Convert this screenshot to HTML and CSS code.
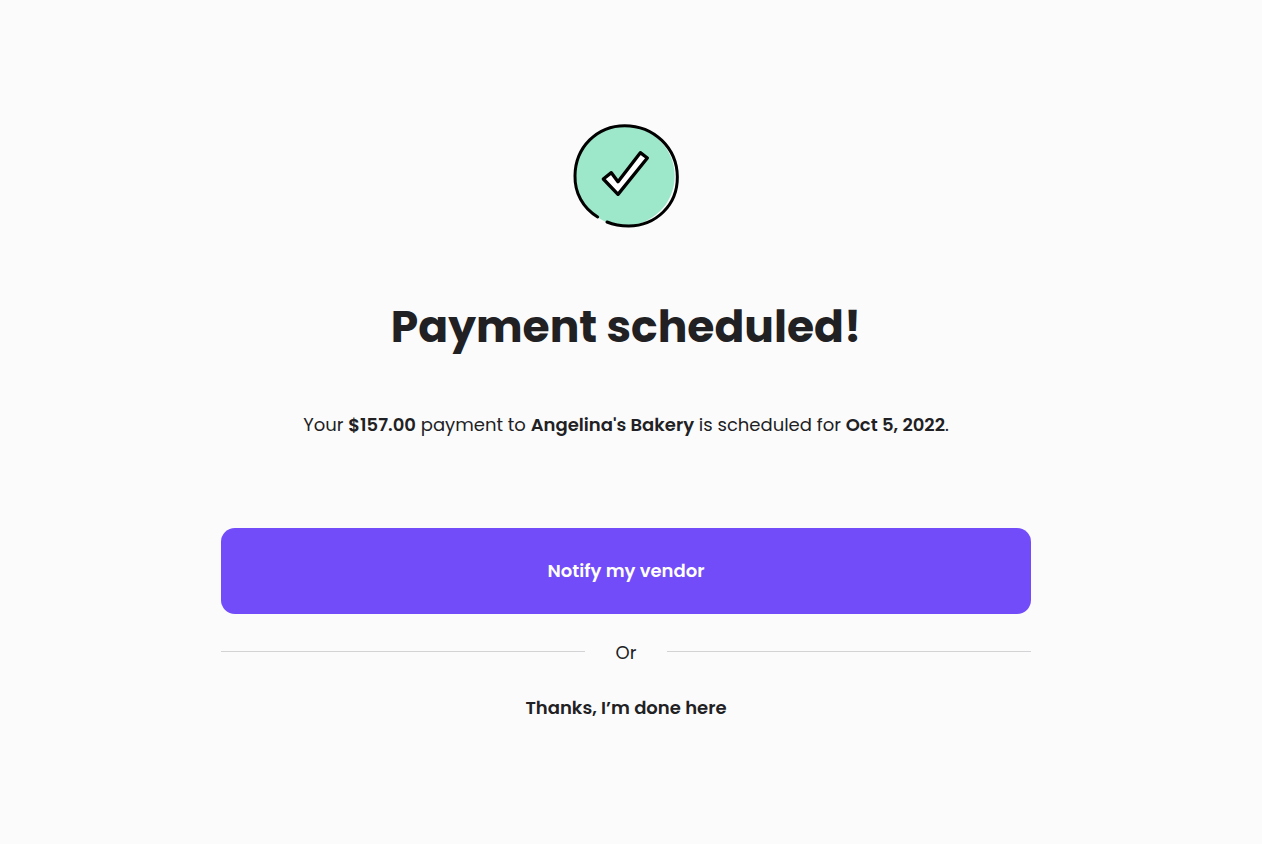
FILE: index.html
```html
<!DOCTYPE html>
<html lang="en">
<head>
<meta charset="utf-8">
<meta name="viewport" content="width=device-width, initial-scale=1">
<title>Payment scheduled</title>
<link rel="stylesheet" href="styles.css">
</head>
<body>
<main class="confirmation">
  <svg class="status-icon" viewBox="0 0 360 360" aria-hidden="true">
    <circle class="status-fill" cx="177" cy="180" r="149"/>
    <path class="status-ring" d="M95 303C50 276 26 230 27 179C28 93 94 29 176 29C264 29 333 96 334 182C335 268 269 329 188 330C164 330 142 326 123 318"/>
    <path class="status-tick" d="M112 189L136 170L156 197L223 110L244 126L156 235Z"/>
  </svg>
  <h1 class="title">Payment scheduled!</h1>
  <p class="summary">Your <strong>$157.00</strong> payment to <strong>Angelina's Bakery</strong> is scheduled for <strong>Oct 5, 2022</strong>.</p>
  <button class="primary" type="button">Notify my vendor</button>
  <div class="divider"><span class="divider-label">Or</span></div>
  <button class="secondary" type="button">Thanks, I’m done here</button>
</main>
</body>
</html>
```
FILE: styles.css
```css
* {
  box-sizing: border-box;
}

body {
  margin: 0;
  padding: 116px 26px 40px 16px;
  background: #fbfbfb;
  color: #212124;
  font-family: Poppins, Inter, sans-serif;
  font-size: 18px;
  line-height: 28px;
}

.confirmation {
  display: flex;
  flex-direction: column;
  align-items: center;
  max-width: 810px;
  margin: 0 auto;
  text-align: center;
}

.status-icon {
  width: 120px;
  height: 120px;
}

.status-fill {
  fill: #9de7ca;
}

.status-ring {
  fill: none;
  stroke: #000;
  stroke-width: 9;
  stroke-linecap: round;
}

.status-tick {
  fill: #fff;
  stroke: #000;
  stroke-width: 10;
  stroke-linejoin: round;
}

.title {
  margin: 61px 0 54px;
  font-size: 44px;
  font-weight: 700;
  line-height: 60px;
}

.summary {
  margin: 0 0 89px;
}

.summary strong {
  font-weight: 600;
}

.primary,
.secondary {
  border: 0;
  font: inherit;
  font-weight: 600;
  cursor: pointer;
}

.primary {
  width: 100%;
  padding: 29px 16px;
  border-radius: 14px;
  background: #724cf9;
  color: #fff;
}

.divider {
  display: flex;
  align-items: center;
  gap: 31px;
  width: 100%;
  margin: 21px 0 27px;
}

.divider-label {
  padding-top: 4px;
}

.divider::before,
.divider::after {
  content: "";
  flex: 1;
  height: 1px;
  background: #d3d3d5;
}

.secondary {
  padding: 0;
  background: none;
  color: inherit;
}
```
